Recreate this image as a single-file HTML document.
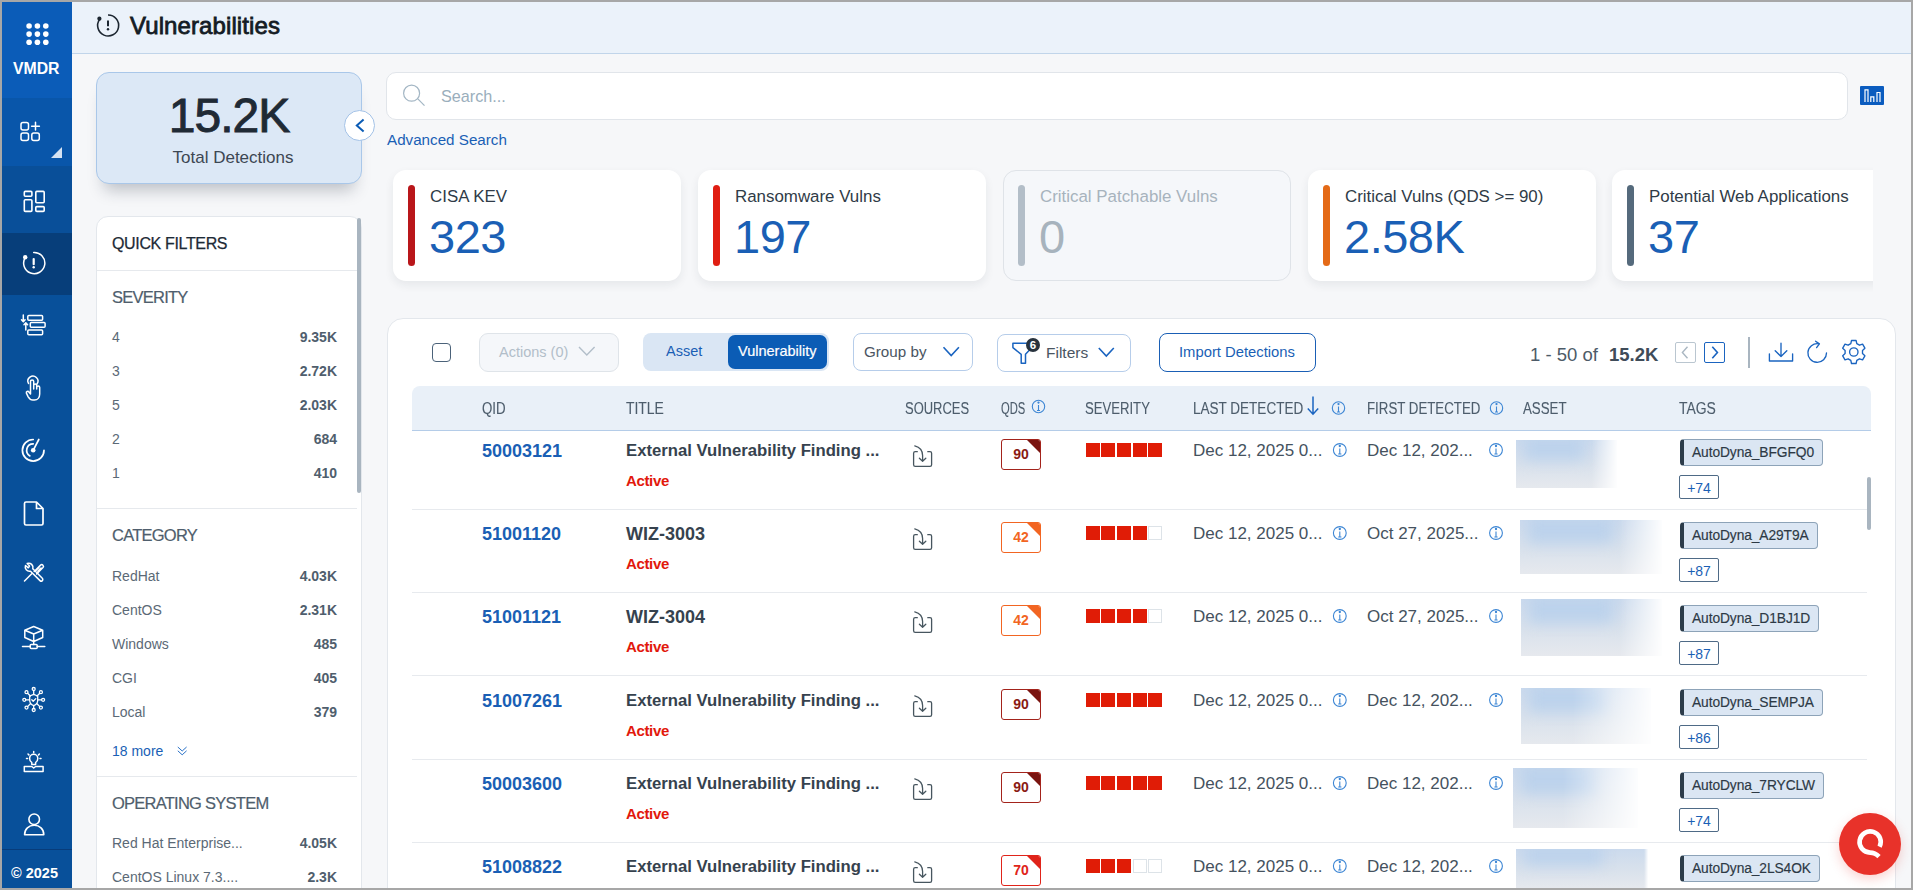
<!DOCTYPE html>
<html><head><meta charset="utf-8">
<style>
*{box-sizing:border-box;margin:0;padding:0}
html,body{width:1913px;height:890px;overflow:hidden;background:#f6f7f9;font-family:"Liberation Sans",sans-serif}
#app{position:absolute;left:0;top:0;width:1913px;height:890px;background:#f6f7f9;overflow:hidden}
.a{position:absolute}
.t{position:absolute;white-space:nowrap;line-height:1}
.bd{position:absolute;background:#a7a7a7;z-index:100}
#side{position:absolute;left:2px;top:2px;width:70px;height:886px;background:#08509a}
#side .sec{position:absolute;left:0;width:70px}
svg{position:absolute;overflow:visible}
#hdr{position:absolute;left:72px;top:2px;width:1839px;height:52px;background:#ebf2fa;border-bottom:1px solid #c1d5ea}
.scard{position:absolute;top:170px;width:288px;height:111px;background:#fff;border-radius:13px;box-shadow:0 4px 10px rgba(30,40,60,.075)}
.scard .bar{position:absolute;left:15px;top:15px;width:7px;height:81px;border-radius:4px}
.scard .ttl{position:absolute;left:37px;top:19px;font-size:16.9px;color:#2f3b47;white-space:nowrap;line-height:16px}
.scard .num{position:absolute;left:36px;top:43px;font-size:47px;color:#1a5fb5;white-space:nowrap;line-height:47px;letter-spacing:-0.5px}
.med{-webkit-text-stroke:0.25px currentColor}
/* filter panel */
.fh{position:absolute;left:112px;font-size:16.5px;letter-spacing:-0.75px;line-height:16px;color:#4f5e6d;white-space:nowrap;-webkit-text-stroke:0.2px #4f5e6d}
.fl{position:absolute;left:112px;font-size:14px;line-height:14px;color:#5b6976;white-space:nowrap}
.fc{position:absolute;right:1576px;font-size:14px;line-height:14px;color:#4f5e6d;font-weight:700;white-space:nowrap;text-align:right}
.sep{position:absolute;height:1px;background:#e6e9ed}
/* table */
.th{position:absolute;top:401px;font-size:16px;line-height:16px;color:#4d5d6c;-webkit-text-stroke:0.12px #4d5d6c;white-space:nowrap;transform-origin:0 0;transform:scaleX(.83)}
.qid{position:absolute;left:482px;font-size:18px;line-height:18px;font-weight:700;color:#1a5fb5;white-space:nowrap}
.ttl2{position:absolute;left:626px;font-size:17px;line-height:18px;font-weight:700;color:#36424e;white-space:nowrap}
.act{position:absolute;left:626px;font-size:15px;line-height:15px;font-weight:700;color:#e2180c;white-space:nowrap;letter-spacing:-0.35px}
.dt{position:absolute;font-size:17px;line-height:17px;color:#45525e;white-space:nowrap}
.qds{position:absolute;left:1001px;width:40px;height:31px;border:1.5px solid;border-radius:3px;background:#fff;overflow:hidden}
.qds i{position:absolute;right:-1px;top:-1px;width:0;height:0;border-left:15px solid transparent;border-top:15px solid}
.qds b{position:absolute;left:0;right:0;top:6.5px;text-align:center;font-size:14px;line-height:14px}
.sq{position:absolute;width:14.2px;height:14px;background:#e01c06}
.sq.e{background:#fff;border:1px solid #dde3e8}
.tag{position:absolute;left:1680px;height:27px;background:#dbe6f3;border:1px solid #8da3b8;border-left:4px solid #2c3c4a;border-radius:4px;font-size:13.8px;letter-spacing:-0.1px;-webkit-text-stroke:0.15px #2d3945;line-height:25px;color:#2d3945;padding-left:8px;padding-right:8px;white-space:nowrap}
.more{position:absolute;left:1679px;width:40px;height:24px;border:1px solid #4e6a86;border-radius:2px;font-size:14px;line-height:24px;color:#1a5fb5;text-align:center}
.blur{position:absolute;filter:blur(7px);overflow:visible}
</style></head><body>
<div id="app">
 <!-- sidebar -->
 <div id="side">
  <div class="sec" style="top:0;height:96px;background:#0b5cb8"></div>
  <div class="sec" style="top:96px;height:68px;background:#0956aa"></div>
  <div class="sec" style="top:164px;height:67px;background:#094f99"></div>
  <div class="sec" style="top:231px;height:62px;background:#073e7a"></div>
  <div class="sec" style="top:847px;height:1px;background:#083c7a"></div>
 </div>
 <svg width="1913" height="890" style="left:0;top:0" fill="none" stroke="#fff" stroke-width="1.5" stroke-linecap="round" stroke-linejoin="round">
  <!-- dots -->
  <g fill="#fff" stroke="none">
   <circle cx="29.1" cy="26" r="2.8"/><circle cx="37.4" cy="26" r="2.8"/><circle cx="45.8" cy="26" r="2.8"/>
   <circle cx="29.1" cy="34.1" r="2.8"/><circle cx="37.4" cy="34.1" r="2.8"/><circle cx="45.8" cy="34.1" r="2.8"/>
   <circle cx="29.1" cy="42.2" r="2.8"/><circle cx="37.4" cy="42.2" r="2.8"/><circle cx="45.8" cy="42.2" r="2.8"/>
  </g>
  <!-- add icon -->
  <rect x="21" y="122.5" width="7.5" height="7.5" rx="2"/>
  <rect x="21" y="133" width="7.5" height="7.5" rx="2"/>
  <rect x="31.8" y="133" width="7.5" height="7.5" rx="2"/>
  <path d="M31.6 126.2H39.4M35.5 122.3V130.1"/>
  <path d="M62 147L62 158L51 158Z" fill="#d5e2f2" stroke="none"/>
  <!-- dashboard -->
  <g stroke-width="1.6">
  <rect x="24.3" y="191.4" width="7.6" height="4.8" rx="1"/>
  <rect x="24.3" y="199.8" width="7.6" height="11.6" rx="1"/>
  <rect x="35.8" y="191.4" width="8.4" height="11.4" rx="1"/>
  <rect x="35.8" y="206.6" width="8.4" height="4.8" rx="1"/>
  </g>
  <!-- vuln -->
  <path d="M33.7 252.5A10.6 10.6 0 1 1 25.3 257.4" />
  <circle cx="25.2" cy="257.3" r="2.2" fill="#fff" stroke="none"/>
  <path d="M33.7 259V264.2" stroke-width="2.2"/>
  <circle cx="33.7" cy="267.3" r="1.2" fill="#fff" stroke="none"/>
  <!-- prioritize -->
  <g stroke-width="1.5">
  <rect x="27.8" y="315.6" width="14.8" height="4.6" rx="1"/>
  <rect x="30.3" y="322.6" width="14.8" height="4.6" rx="1"/>
  <rect x="27.8" y="329.9" width="14.8" height="4.8" rx="1"/>
  <path d="M23.3 315V321.5M21.5 319.8L23.3 321.8L25.1 319.8"/>
  <path d="M25.8 330V323M24 324.8L25.8 322.8L27.6 324.8"/>
  </g>
  <!-- hand -->
  <g stroke-width="1.5">
  <path d="M28.5 383.5A5 5 0 1 1 37 384"/>
  <path d="M30.5 394V381.5A1.6 1.6 0 0 1 33.7 381.5V389M33.7 387V385.6A1.5 1.5 0 0 1 36.7 385.6V389M36.7 387.5A1.5 1.5 0 0 1 39.7 387.5V394C39.7 397.5 37.5 400 34.5 400H32.8C30.5 400 29.3 398.6 28.2 396.8L26.4 393.2A1.4 1.4 0 0 1 28.9 392L30.5 394"/>
  </g>
  <!-- radar -->
  <g stroke-width="1.7">
  <path d="M33.2 439.5A10.8 10.8 0 1 0 44 450.3"/>
  <path d="M33.2 443.8A6.5 6.5 0 0 0 29.9 455.9"/>
  <path d="M33.2 450.3L38.8 439.5"/>
  <circle cx="33.2" cy="450.3" r="2.3" fill="#fff" stroke="none"/>
  </g>
  <!-- doc -->
  <path d="M26 502H36.5L43 508.5V523.5A1.5 1.5 0 0 1 41.5 525H26A1.5 1.5 0 0 1 24.5 523.5V503.5A1.5 1.5 0 0 1 26 502ZM36.5 502V508.5H43" stroke-width="1.7"/>
  <!-- tools -->
  <g stroke-width="1.5">
  <path d="M25.5 565.5A4.3 4.3 0 0 0 30.5 571.2L40 580.6A1.6 1.6 0 0 0 42.3 578.3L32.8 568.8A4.3 4.3 0 0 0 27.2 563.5L29.5 566L28.3 567.8Z"/>
  <path d="M34.2 571.5L40.6 565.1A1.7 1.7 0 0 1 43 567.5L36.6 573.9M39 567.5L35.7 570.8M41 568L37.8 571.2M31.7 573.8L24.5 581"/>
  </g>
  <!-- network box -->
  <g stroke-width="1.5">
  <path d="M33.7 626.5L42.7 630.2V637.5L33.7 641.5L24.8 637.5V630.2Z M24.8 630.2L33.7 634L42.7 630.2M33.7 634V644.5"/>
  <path d="M22.5 646.5H30.2M37.2 646.5H44.8"/>
  <rect x="30.2" y="644.6" width="7" height="3.8" rx="1"/>
  </g>
  <!-- shield network -->
  <g stroke-width="1.3">
  <path d="M33.7 694.3L37.7 696V700.2C37.7 703 36 704.8 33.7 705.6C31.4 704.8 29.7 703 29.7 700.2V696Z"/>
  <path d="M31.8 699.8L33.2 701.3L35.8 698.6"/>
  <path d="M33.7 694V690.5M33.7 705.8V708.6M29.5 699.8H25.8M37.9 699.8H41.6M30.4 696L27.6 693.2M37 696L39.8 693.2M30.4 703.8L27.6 706.6M37 703.8L39.8 706.6"/>
  <circle cx="33.7" cy="689" r="1.5"/><circle cx="33.7" cy="710" r="1.5"/><circle cx="24.3" cy="699.8" r="1.5"/><circle cx="43.1" cy="699.8" r="1.5"/>
  <circle cx="26.5" cy="692.2" r="1.5"/><circle cx="40.9" cy="692.2" r="1.5"/><circle cx="26.5" cy="707.6" r="1.5"/><circle cx="40.9" cy="707.6" r="1.5"/>
  </g>
  <!-- bulb -->
  <g stroke-width="1.5">
  <path d="M31.8 764.5V762.5C30.3 761.4 29.6 760 29.6 758.4A4.1 4.1 0 0 1 37.8 758.4C37.8 760 37.1 761.4 35.6 762.5V764.5Z"/>
  <path d="M33.7 751.5V752.8M28 754L28.9 754.9M39.4 754L38.5 754.9M26.5 758.5H27.5M40 758.5H41"/>
  <path d="M24.3 766.5H31.8L33.7 768L35.6 766.5H43.1V771.5H24.3Z"/>
  </g>
  <!-- person -->
  <circle cx="34.2" cy="819.3" r="5.3" stroke-width="1.6"/>
  <path d="M24.6 834.7C24.6 829 28.8 825.3 34.2 825.3C39.6 825.3 43.8 829 43.8 834.7Z" stroke-width="1.6"/>
 </svg>
 <div class="t" style="left:13px;top:61px;font-size:15.8px;line-height:16px;color:#fff;font-weight:700">VMDR</div>
 <div class="t" style="left:11px;top:866px;font-size:14.5px;line-height:15px;color:#fff;font-weight:700">© 2025</div>

 <!-- header -->
 <div id="hdr"></div>
 <svg width="30" height="30" style="left:0;top:0" fill="none" stroke="#1c2630" stroke-width="1.6">
  <path d="M108 15A10.5 10.5 0 1 1 99.6 19.4"/>
 </svg>
 <svg width="1" height="1" style="left:0;top:0">
  <circle cx="99.4" cy="18.7" r="2.1" fill="#1c2630"/>
  <path d="M108 20.5V26.3" stroke="#1c2630" stroke-width="2"/>
  <circle cx="108" cy="29.2" r="1.2" fill="#1c2630"/>
 </svg>
 <div class="t" style="left:130px;top:13.5px;font-size:24px;line-height:24px;color:#141c24;-webkit-text-stroke:0.8px #141c24;letter-spacing:0.1px">Vulnerabilities</div>

 <!-- total detections -->
 <div class="a" style="left:96px;top:72px;width:266px;height:112px;background:#dce8f6;border:1px solid #a9c7e9;border-radius:13px;box-shadow:0 14px 16px -8px rgba(30,40,60,.27)"></div>
 <div class="t" style="left:96px;width:266px;text-align:center;top:91px;font-size:48px;line-height:50px;color:#1f2a35;letter-spacing:-1px;-webkit-text-stroke:0.95px #1f2a35">15.2K</div>
 <div class="t" style="left:100px;width:266px;text-align:center;top:149px;font-size:17px;line-height:17px;color:#3c4753">Total Detections</div>
 <div class="a" style="left:344px;top:110px;width:31px;height:31px;border-radius:50%;background:#fff;border:1px solid #a3c2e7"></div>
 <svg width="1" height="1" style="left:0;top:0"><path d="M363.6 119.4L356.8 125.4L363.6 131.6" fill="none" stroke="#0b5cb5" stroke-width="2"/></svg>

 <!-- search -->
 <div class="a" style="left:386px;top:72px;width:1462px;height:48px;background:#fff;border:1px solid #e1e5ea;border-radius:10px"></div>
 <svg width="1" height="1" style="left:0;top:0" fill="none" stroke="#a3b6c4" stroke-width="1.2">
  <circle cx="411.6" cy="93.2" r="8"/><path d="M417.6 98.6L424.5 105.6"/>
 </svg>
 <div class="t" style="left:441px;top:88px;font-size:16.2px;line-height:16px;color:#9aaebc">Search...</div>
 <div class="t" style="left:387px;top:132px;font-size:15.2px;line-height:16px;color:#1a5fb5">Advanced Search</div>
 <div class="a" style="left:1860px;top:86px;width:24px;height:19px;background:#0b5cbf;border-radius:1px"></div>
 <svg width="1" height="1" style="left:0;top:0" fill="none" stroke="#fff" stroke-width="1.2">
  <path d="M1865 102V89.8H1868V102M1870.8 102V96.8H1873.8V102M1877 102V92.5H1880V102"/>
 </svg>

 <!-- stat cards -->
 <div class="scard" style="left:393px"><div class="bar" style="background:#b9161a"></div><div class="ttl">CISA KEV</div><div class="num">323</div></div>
 <div class="scard" style="left:698px"><div class="bar" style="background:#e01e12"></div><div class="ttl">Ransomware Vulns</div><div class="num">197</div></div>
 <div class="scard" style="left:1003px;background:#f5f7fa;border:1px solid #dfe3e8;box-shadow:none"><div class="bar" style="left:14px;top:14px;background:#b3bec8"></div><div class="ttl" style="left:36px;top:18px;color:#a7b3bd">Critical Patchable Vulns</div><div class="num" style="left:35px;top:42px;color:#a7b3bd">0</div></div>
 <div class="scard" style="left:1308px"><div class="bar" style="background:#e46a17"></div><div class="ttl">Critical Vulns (QDS &gt;= 90)</div><div class="num">2.58K</div></div>
 <div class="a" style="left:1600px;top:160px;width:273px;height:135px;overflow:hidden">
  <div class="scard" style="left:12px;top:10px"><div class="bar" style="background:#556a7c"></div><div class="ttl">Potential Web Applications</div><div class="num">37</div></div>
 </div>

 <!-- filter panel -->
 <div class="a" style="left:96px;top:216px;width:266px;height:700px;background:#fff;border:1px solid #e3e7ec;border-radius:12px"></div>
 <div class="a" style="left:357px;top:218px;width:4px;height:275px;background:#a9b5c0;border-radius:2px"></div>
 <div class="t med" style="left:112px;top:236px;font-size:16px;line-height:16px;color:#1d2a36;letter-spacing:-0.35px">QUICK FILTERS</div>
 <div class="sep" style="left:97px;top:270px;width:260px"></div>
 <div class="fh" style="top:289px">SEVERITY</div>
 <div class="fl" style="top:330px">4</div><div class="fc" style="top:330px">9.35K</div>
 <div class="fl" style="top:364px">3</div><div class="fc" style="top:364px">2.72K</div>
 <div class="fl" style="top:398px">5</div><div class="fc" style="top:398px">2.03K</div>
 <div class="fl" style="top:432px">2</div><div class="fc" style="top:432px">684</div>
 <div class="fl" style="top:466px">1</div><div class="fc" style="top:466px">410</div>
 <div class="sep" style="left:97px;top:508px;width:260px"></div>
 <div class="fh" style="top:527px">CATEGORY</div>
 <div class="fl" style="top:569px">RedHat</div><div class="fc" style="top:569px">4.03K</div>
 <div class="fl" style="top:603px">CentOS</div><div class="fc" style="top:603px">2.31K</div>
 <div class="fl" style="top:637px">Windows</div><div class="fc" style="top:637px">485</div>
 <div class="fl" style="top:671px">CGI</div><div class="fc" style="top:671px">405</div>
 <div class="fl" style="top:705px">Local</div><div class="fc" style="top:705px">379</div>
 <div class="fl" style="top:744px;color:#1a5fb5">18 more</div>
 <svg width="1" height="1" style="left:0;top:0" fill="none" stroke="#2a72c8" stroke-width="1"><path d="M177.8 747L182.2 751L186.6 747M177.8 750.8L182.2 754.8L186.6 750.8"/></svg>
 <div class="sep" style="left:97px;top:776px;width:260px"></div>
 <div class="fh" style="top:795px">OPERATING SYSTEM</div>
 <div class="fl" style="top:836px">Red Hat Enterprise...</div><div class="fc" style="top:836px">4.05K</div>
 <div class="fl" style="top:870px">CentOS Linux 7.3....</div><div class="fc" style="top:870px">2.3K</div>

 <!-- TABLE CARD -->
 <div class="a" style="left:387px;top:318px;width:1509px;height:620px;background:#fff;border:1px solid #e3e7ec;border-radius:16px"></div>
 <!-- toolbar -->
 <div class="a" style="left:432px;top:343px;width:19px;height:19px;border:1.5px solid #4b6279;border-radius:4px"></div>
 <div class="a" style="left:479px;top:333px;width:140px;height:39px;background:#f5f7fa;border:1px solid #dfe4e9;border-radius:9px"></div>
 <div class="t" style="left:499px;top:345px;font-size:14.5px;line-height:15px;color:#b2bec9">Actions (0)</div>
 <svg width="1" height="1" style="left:0;top:0" fill="none" stroke="#b2bec9" stroke-width="1.4"><path d="M579 347L586.8 355L594.6 347"/></svg>
 <div class="a" style="left:643px;top:333px;width:186px;height:38px;background:#dae6f4;border-radius:8px"></div>
 <div class="a" style="left:728px;top:335px;width:99px;height:34px;background:#0b5cb5;border-radius:7px"></div>
 <div class="t" style="left:666px;top:344px;font-size:14.5px;line-height:15px;color:#1a5fb5">Asset</div>
 <div class="t" style="left:738px;top:344px;font-size:14.5px;line-height:15px;color:#fff;-webkit-text-stroke:0.2px #fff">Vulnerability</div>
 <div class="a" style="left:853px;top:333px;width:120px;height:38px;background:#fff;border:1px solid #b6cdea;border-radius:8px"></div>
 <div class="t" style="left:864px;top:344px;font-size:15.2px;line-height:16px;color:#4a5562">Group by</div>
 <svg width="1" height="1" style="left:0;top:0" fill="none" stroke="#1a64c0" stroke-width="1.6"><path d="M943.5 347.2L951.2 355.6L958.9 347.2"/></svg>
 <div class="a" style="left:997px;top:334px;width:134px;height:38px;background:#fff;border:1px solid #b6cdea;border-radius:8px"></div>
 <svg width="1" height="1" style="left:0;top:0" fill="none" stroke="#1a64c0" stroke-width="1.5" stroke-linejoin="round"><path d="M1012.9 343.2H1030V349.5L1025.5 354.3V363.3H1021.2V354.3L1012.9 347.6Z"/></svg>
 <div class="a" style="left:1026px;top:337.5px;width:14px;height:14px;border-radius:50%;background:#28333e"></div>
 <div class="t" style="left:1026px;width:14px;text-align:center;top:339px;font-size:11.5px;line-height:12px;color:#fff;font-weight:700">6</div>
 <div class="t" style="left:1046px;top:345px;font-size:15.5px;line-height:16px;color:#4a5562">Filters</div>
 <svg width="1" height="1" style="left:0;top:0" fill="none" stroke="#1a64c0" stroke-width="1.6"><path d="M1098.8 348L1106.3 356L1113.8 348"/></svg>
 <div class="a" style="left:1159px;top:333px;width:157px;height:39px;border:1.5px solid #1a5fb5;border-radius:8px"></div>
 <div class="t" style="left:1179px;top:345px;font-size:14.8px;line-height:15px;color:#1a5fb5">Import Detections</div>
 <div class="t" style="left:1530px;top:345.5px;font-size:18.5px;line-height:18px;color:#4d5b68">1 - 50 of</div>
 <div class="t" style="left:1609px;top:345.5px;font-size:18.5px;line-height:18px;color:#3f4c59;font-weight:700">15.2K</div>
 <div class="a" style="left:1675px;top:342px;width:21px;height:21px;border:1.2px solid #bac6d0;border-radius:2px"></div>
 <div class="a" style="left:1704px;top:342px;width:21px;height:21px;border:1.5px solid #1a64c0;border-radius:2px"></div>
 <svg width="1" height="1" style="left:0;top:0" fill="none" stroke-width="1.4">
  <path d="M1687.5 346.8L1682.4 352.5L1687.5 358.2" stroke="#aab7c2"/>
  <path d="M1712.3 346.8L1717.4 352.5L1712.3 358.2" stroke="#1a64c0" stroke-width="1.6"/>
 </svg>
 <div class="a" style="left:1748px;top:337px;width:2px;height:31px;background:#a9b5c0"></div>
 <svg width="1" height="1" style="left:0;top:0" fill="none" stroke="#1a64c0" stroke-width="1.35" stroke-linecap="round" stroke-linejoin="round">
  <path d="M1769.4 353.8V361H1792.6V353.8"/>
  <path d="M1781 343.2V356.5M1775.2 350.8L1781 356.5L1786.8 350.8"/>
  <path d="M1826.5 353A9.3 9.3 0 1 1 1818.5 343.8"/>
  <path d="M1815.6 341.2L1819.4 343.9L1816.6 347.6"/>
  <path d="M1851.5 340.5H1856.1L1856.8 343.6L1859.5 345.2L1862.6 344.2L1864.9 348.2L1862.5 350.4V353.6L1864.9 355.8L1862.6 359.8L1859.5 358.8L1856.8 360.4L1856.1 363.5H1851.5L1850.8 360.4L1848.1 358.8L1845 359.8L1842.7 355.8L1845.1 353.6V350.4L1842.7 348.2L1845 344.2L1848.1 345.2L1850.8 343.6Z"/>
  <circle cx="1853.8" cy="352" r="4.2"/>
 </svg>

 <!-- table header -->
 <div class="a" style="left:412px;top:386px;width:1459px;height:45px;background:#e9f0f8;border-bottom:1px solid #b4cce8;border-radius:8px 8px 0 0"></div>
 <div class="th" style="left:482px">QID</div>
 <div class="th" style="left:626px;transform:scaleX(.87)">TITLE</div>
 <div class="th" style="left:905px;transform:scaleX(.81)">SOURCES</div>
 <div class="th" style="left:1001px;transform:scaleX(.7)">QDS</div>
 <div class="th" style="left:1085px;transform:scaleX(.82)">SEVERITY</div>
 <div class="th" style="left:1193px;transform:scaleX(.845)">LAST DETECTED</div>
 <div class="th" style="left:1367px">FIRST DETECTED</div>
 <div class="th" style="left:1523px">ASSET</div>
 <div class="th" style="left:1679px;transform:scaleX(.87)">TAGS</div>
 <svg width="1" height="1" style="left:0;top:0" fill="none" stroke="#3d86d4" stroke-width="1.1">
  <circle cx="1038.5" cy="406.5" r="6.2"/><path d="M1038.5 405V410.5M1037 410.5H1040"/><circle cx="1038.5" cy="402.6" r=".6" fill="#3d86d4"/>
  <circle cx="1338.5" cy="408" r="6.2"/><path d="M1338.5 406.5V412M1337 412H1340"/><circle cx="1338.5" cy="404.1" r=".6" fill="#3d86d4"/>
  <circle cx="1496.5" cy="408" r="6.2"/><path d="M1496.5 406.5V412M1495 412H1498"/><circle cx="1496.5" cy="404.1" r=".6" fill="#3d86d4"/>
 </svg>
 <svg width="1" height="1" style="left:0;top:0" fill="none" stroke="#1a64c0" stroke-width="1.5"><path d="M1313 396.5V414M1307.8 408.6L1313 414.2L1318.2 408.6"/></svg>

 <div class="qid" style="top:442px">50003121</div>
<div class="ttl2" style="top:442px;font-size:16.7px">External Vulnerability Finding ...</div>
<div class="act" style="top:473px">Active</div>
<svg width="1" height="1" style="left:0;top:0" fill="none" stroke="#47565f" stroke-width="1.3" stroke-linecap="round" stroke-linejoin="round"><path d="M917.3 451.7H915.2Q913.6 451.7 913.6 453.3V464.8Q913.6 466.4 915.2 466.4H930Q931.6 466.4 931.6 464.8V453.3Q931.6 451.7 930 451.7H927.8"/><path d="M914.8 445.8C919.5 447 922.6 450.5 922.6 455.5V461M919.4 458.2L922.6 461.2L925.8 458.2"/></svg>
<div class="qds" style="top:439px;border-color:#a3231b"><i style="border-top-color:#7a1410"></i><b style="color:#8a1a14">90</b></div>
<div class="sq" style="left:1086px;top:442.5px"></div>
<div class="sq" style="left:1101.3px;top:442.5px"></div>
<div class="sq" style="left:1116.8px;top:442.5px"></div>
<div class="sq" style="left:1132.6px;top:442.5px"></div>
<div class="sq" style="left:1148px;top:442.5px"></div>
<div class="dt" style="left:1193px;top:442px">Dec 12, 2025 0...</div>
<div class="dt" style="left:1367px;top:442px">Dec 12, 202...</div>
<svg width="1" height="1" style="left:0;top:0" fill="none" stroke="#3d86d4" stroke-width="1.1"><circle cx="1339.8" cy="450" r="6.4"/><path d="M1339.8 448.5V454M1338.2 454H1341.4"/><circle cx="1339.8" cy="446" r=".6" fill="#3d86d4"/><circle cx="1496" cy="450" r="6.4"/><path d="M1496 448.5V454M1494.4 454H1497.6"/><circle cx="1496" cy="446" r=".6" fill="#3d86d4"/></svg>
<div class="a" style="left:1516px;top:440px;width:101px;height:48px;overflow:hidden;background:linear-gradient(180deg,#cbdaed 0%,#d8e1ec 50%,#e6e9ee 100%);-webkit-mask-image:linear-gradient(90deg,#000 75%,rgba(0,0,0,0.05) 100%)"><div class="blur" style="left:8px;top:-4px;width:60px;height:24px;background:#bcd2ec"></div></div>
<div class="tag" style="top:439px">AutoDyna_BFGFQ0</div>
<div class="more" style="top:475px">+74</div>
<div class="sep" style="left:412px;top:509px;width:1455px;background:#e7eaee"></div>
<div class="qid" style="top:525px">51001120</div>
<div class="ttl2" style="top:525px;font-size:18px">WIZ-3003</div>
<div class="act" style="top:556px">Active</div>
<svg width="1" height="1" style="left:0;top:0" fill="none" stroke="#47565f" stroke-width="1.3" stroke-linecap="round" stroke-linejoin="round"><path d="M917.3 534.7H915.2Q913.6 534.7 913.6 536.3V547.8Q913.6 549.4 915.2 549.4H930Q931.6 549.4 931.6 547.8V536.3Q931.6 534.7 930 534.7H927.8"/><path d="M914.8 528.8C919.5 530 922.6 533.5 922.6 538.5V544M919.4 541.2L922.6 544.2L925.8 541.2"/></svg>
<div class="qds" style="top:522px;border-color:#f26522"><i style="border-top-color:#f26522"></i><b style="color:#f26522">42</b></div>
<div class="sq" style="left:1086px;top:525.5px"></div>
<div class="sq" style="left:1101.3px;top:525.5px"></div>
<div class="sq" style="left:1116.8px;top:525.5px"></div>
<div class="sq" style="left:1132.6px;top:525.5px"></div>
<div class="sq e" style="left:1148px;top:525.5px"></div>
<div class="dt" style="left:1193px;top:525px">Dec 12, 2025 0...</div>
<div class="dt" style="left:1367px;top:525px">Oct 27, 2025...</div>
<svg width="1" height="1" style="left:0;top:0" fill="none" stroke="#3d86d4" stroke-width="1.1"><circle cx="1339.8" cy="533" r="6.4"/><path d="M1339.8 531.5V537M1338.2 537H1341.4"/><circle cx="1339.8" cy="529" r=".6" fill="#3d86d4"/><circle cx="1496" cy="533" r="6.4"/><path d="M1496 531.5V537M1494.4 537H1497.6"/><circle cx="1496" cy="529" r=".6" fill="#3d86d4"/></svg>
<div class="a" style="left:1520px;top:520px;width:142px;height:54px;overflow:hidden;background:linear-gradient(180deg,#cbdaed 0%,#d8e1ec 50%,#e6e9ee 100%);-webkit-mask-image:linear-gradient(90deg,#000 70%,rgba(0,0,0,0.05) 100%)"><div class="blur" style="left:8px;top:-4px;width:85px;height:27px;background:#bcd2ec"></div></div>
<div class="tag" style="top:522px">AutoDyna_A29T9A</div>
<div class="more" style="top:558px">+87</div>
<div class="sep" style="left:412px;top:592px;width:1455px;background:#e7eaee"></div>
<div class="qid" style="top:608px">51001121</div>
<div class="ttl2" style="top:608px;font-size:18px">WIZ-3004</div>
<div class="act" style="top:639px">Active</div>
<svg width="1" height="1" style="left:0;top:0" fill="none" stroke="#47565f" stroke-width="1.3" stroke-linecap="round" stroke-linejoin="round"><path d="M917.3 617.7H915.2Q913.6 617.7 913.6 619.3V630.8Q913.6 632.4 915.2 632.4H930Q931.6 632.4 931.6 630.8V619.3Q931.6 617.7 930 617.7H927.8"/><path d="M914.8 611.8C919.5 613 922.6 616.5 922.6 621.5V627M919.4 624.2L922.6 627.2L925.8 624.2"/></svg>
<div class="qds" style="top:605px;border-color:#f26522"><i style="border-top-color:#f26522"></i><b style="color:#f26522">42</b></div>
<div class="sq" style="left:1086px;top:608.5px"></div>
<div class="sq" style="left:1101.3px;top:608.5px"></div>
<div class="sq" style="left:1116.8px;top:608.5px"></div>
<div class="sq" style="left:1132.6px;top:608.5px"></div>
<div class="sq e" style="left:1148px;top:608.5px"></div>
<div class="dt" style="left:1193px;top:608px">Dec 12, 2025 0...</div>
<div class="dt" style="left:1367px;top:608px">Oct 27, 2025...</div>
<svg width="1" height="1" style="left:0;top:0" fill="none" stroke="#3d86d4" stroke-width="1.1"><circle cx="1339.8" cy="616" r="6.4"/><path d="M1339.8 614.5V620M1338.2 620H1341.4"/><circle cx="1339.8" cy="612" r=".6" fill="#3d86d4"/><circle cx="1496" cy="616" r="6.4"/><path d="M1496 614.5V620M1494.4 620H1497.6"/><circle cx="1496" cy="612" r=".6" fill="#3d86d4"/></svg>
<div class="a" style="left:1521px;top:599px;width:141px;height:57px;overflow:hidden;background:linear-gradient(180deg,#cbdaed 0%,#d8e1ec 50%,#e6e9ee 100%);-webkit-mask-image:linear-gradient(90deg,#000 70%,rgba(0,0,0,0.05) 100%)"><div class="blur" style="left:8px;top:-4px;width:84px;height:28px;background:#bcd2ec"></div></div>
<div class="tag" style="top:605px">AutoDyna_D1BJ1D</div>
<div class="more" style="top:641px">+87</div>
<div class="sep" style="left:412px;top:675px;width:1455px;background:#e7eaee"></div>
<div class="qid" style="top:692px">51007261</div>
<div class="ttl2" style="top:692px;font-size:16.7px">External Vulnerability Finding ...</div>
<div class="act" style="top:723px">Active</div>
<svg width="1" height="1" style="left:0;top:0" fill="none" stroke="#47565f" stroke-width="1.3" stroke-linecap="round" stroke-linejoin="round"><path d="M917.3 701.7H915.2Q913.6 701.7 913.6 703.3V714.8Q913.6 716.4 915.2 716.4H930Q931.6 716.4 931.6 714.8V703.3Q931.6 701.7 930 701.7H927.8"/><path d="M914.8 695.8C919.5 697 922.6 700.5 922.6 705.5V711M919.4 708.2L922.6 711.2L925.8 708.2"/></svg>
<div class="qds" style="top:689px;border-color:#a3231b"><i style="border-top-color:#7a1410"></i><b style="color:#8a1a14">90</b></div>
<div class="sq" style="left:1086px;top:692.5px"></div>
<div class="sq" style="left:1101.3px;top:692.5px"></div>
<div class="sq" style="left:1116.8px;top:692.5px"></div>
<div class="sq" style="left:1132.6px;top:692.5px"></div>
<div class="sq" style="left:1148px;top:692.5px"></div>
<div class="dt" style="left:1193px;top:692px">Dec 12, 2025 0...</div>
<div class="dt" style="left:1367px;top:692px">Dec 12, 202...</div>
<svg width="1" height="1" style="left:0;top:0" fill="none" stroke="#3d86d4" stroke-width="1.1"><circle cx="1339.8" cy="700" r="6.4"/><path d="M1339.8 698.5V704M1338.2 704H1341.4"/><circle cx="1339.8" cy="696" r=".6" fill="#3d86d4"/><circle cx="1496" cy="700" r="6.4"/><path d="M1496 698.5V704M1494.4 704H1497.6"/><circle cx="1496" cy="696" r=".6" fill="#3d86d4"/></svg>
<div class="a" style="left:1521px;top:688px;width:130px;height:56px;overflow:hidden;background:linear-gradient(180deg,#cbdaed 0%,#d8e1ec 50%,#e6e9ee 100%);-webkit-mask-image:linear-gradient(90deg,#000 40%,rgba(0,0,0,0.05) 100%)"><div class="blur" style="left:8px;top:-4px;width:78px;height:28px;background:#bcd2ec"></div></div>
<div class="tag" style="top:689px">AutoDyna_SEMPJA</div>
<div class="more" style="top:725px">+86</div>
<div class="sep" style="left:412px;top:759px;width:1455px;background:#e7eaee"></div>
<div class="qid" style="top:775px">50003600</div>
<div class="ttl2" style="top:775px;font-size:16.7px">External Vulnerability Finding ...</div>
<div class="act" style="top:806px">Active</div>
<svg width="1" height="1" style="left:0;top:0" fill="none" stroke="#47565f" stroke-width="1.3" stroke-linecap="round" stroke-linejoin="round"><path d="M917.3 784.7H915.2Q913.6 784.7 913.6 786.3V797.8Q913.6 799.4 915.2 799.4H930Q931.6 799.4 931.6 797.8V786.3Q931.6 784.7 930 784.7H927.8"/><path d="M914.8 778.8C919.5 780 922.6 783.5 922.6 788.5V794M919.4 791.2L922.6 794.2L925.8 791.2"/></svg>
<div class="qds" style="top:772px;border-color:#a3231b"><i style="border-top-color:#7a1410"></i><b style="color:#8a1a14">90</b></div>
<div class="sq" style="left:1086px;top:775.5px"></div>
<div class="sq" style="left:1101.3px;top:775.5px"></div>
<div class="sq" style="left:1116.8px;top:775.5px"></div>
<div class="sq" style="left:1132.6px;top:775.5px"></div>
<div class="sq" style="left:1148px;top:775.5px"></div>
<div class="dt" style="left:1193px;top:775px">Dec 12, 2025 0...</div>
<div class="dt" style="left:1367px;top:775px">Dec 12, 202...</div>
<svg width="1" height="1" style="left:0;top:0" fill="none" stroke="#3d86d4" stroke-width="1.1"><circle cx="1339.8" cy="783" r="6.4"/><path d="M1339.8 781.5V787M1338.2 787H1341.4"/><circle cx="1339.8" cy="779" r=".6" fill="#3d86d4"/><circle cx="1496" cy="783" r="6.4"/><path d="M1496 781.5V787M1494.4 787H1497.6"/><circle cx="1496" cy="779" r=".6" fill="#3d86d4"/></svg>
<div class="a" style="left:1513px;top:768px;width:125px;height:60px;overflow:hidden;background:linear-gradient(180deg,#cbdaed 0%,#d8e1ec 50%,#e6e9ee 100%);-webkit-mask-image:linear-gradient(90deg,#000 40%,rgba(0,0,0,0.05) 100%)"><div class="blur" style="left:8px;top:-4px;width:75px;height:30px;background:#bcd2ec"></div></div>
<div class="tag" style="top:772px">AutoDyna_7RYCLW</div>
<div class="more" style="top:808px">+74</div>
<div class="sep" style="left:412px;top:842px;width:1455px;background:#e7eaee"></div>
<div class="qid" style="top:858px">51008822</div>
<div class="ttl2" style="top:858px;font-size:16.7px">External Vulnerability Finding ...</div>
<div class="act" style="top:889px">Active</div>
<svg width="1" height="1" style="left:0;top:0" fill="none" stroke="#47565f" stroke-width="1.3" stroke-linecap="round" stroke-linejoin="round"><path d="M917.3 867.7H915.2Q913.6 867.7 913.6 869.3V880.8Q913.6 882.4 915.2 882.4H930Q931.6 882.4 931.6 880.8V869.3Q931.6 867.7 930 867.7H927.8"/><path d="M914.8 861.8C919.5 863 922.6 866.5 922.6 871.5V877M919.4 874.2L922.6 877.2L925.8 874.2"/></svg>
<div class="qds" style="top:855px;border-color:#e0241a"><i style="border-top-color:#e0241a"></i><b style="color:#e0241a">70</b></div>
<div class="sq" style="left:1086px;top:858.5px"></div>
<div class="sq" style="left:1101.3px;top:858.5px"></div>
<div class="sq" style="left:1116.8px;top:858.5px"></div>
<div class="sq e" style="left:1132.6px;top:858.5px"></div>
<div class="sq e" style="left:1148px;top:858.5px"></div>
<div class="dt" style="left:1193px;top:858px">Dec 12, 2025 0...</div>
<div class="dt" style="left:1367px;top:858px">Dec 12, 202...</div>
<svg width="1" height="1" style="left:0;top:0" fill="none" stroke="#3d86d4" stroke-width="1.1"><circle cx="1339.8" cy="866" r="6.4"/><path d="M1339.8 864.5V870M1338.2 870H1341.4"/><circle cx="1339.8" cy="862" r=".6" fill="#3d86d4"/><circle cx="1496" cy="866" r="6.4"/><path d="M1496 864.5V870M1494.4 870H1497.6"/><circle cx="1496" cy="862" r=".6" fill="#3d86d4"/></svg>
<div class="a" style="left:1516px;top:849px;width:132px;height:40px;overflow:hidden;background:linear-gradient(180deg,#cbdaed 0%,#d8e1ec 50%,#e6e9ee 100%);-webkit-mask-image:linear-gradient(90deg,#000 97%,rgba(0,0,0,0.05) 100%)"><div class="blur" style="left:8px;top:-4px;width:79px;height:20px;background:#bcd2ec"></div></div>
<div class="tag" style="top:855px">AutoDyna_2LS4OK</div>
 <div class="a" style="left:1867px;top:477px;width:4px;height:53px;background:#a9b5c0;border-radius:2px"></div>

 <!-- chat button -->
 <div class="a" style="left:1839px;top:813px;width:62px;height:62px;border-radius:50%;background:#e8322a;box-shadow:0 4px 12px rgba(232,50,42,.22)"></div>
 <svg width="1" height="1" style="left:0;top:0" fill="none" stroke="#fff" stroke-width="4.6" stroke-linecap="butt">
  <path d="M1879.6 846.8A10.6 10.6 0 1 0 1870 852.6"/>
  <path d="M1870 852.6C1873.5 852.6 1876.5 854 1879 856.6"/>
 </svg>
 <!-- borders -->
 <div class="bd" style="left:0;top:0;width:1913px;height:2px"></div>
 <div class="bd" style="left:0;top:0;width:2px;height:890px"></div>
 <div class="bd" style="left:1911px;top:0;width:2px;height:890px"></div>
 <div class="bd" style="left:0;top:888px;width:1913px;height:2px"></div>
</div>
</body></html>
